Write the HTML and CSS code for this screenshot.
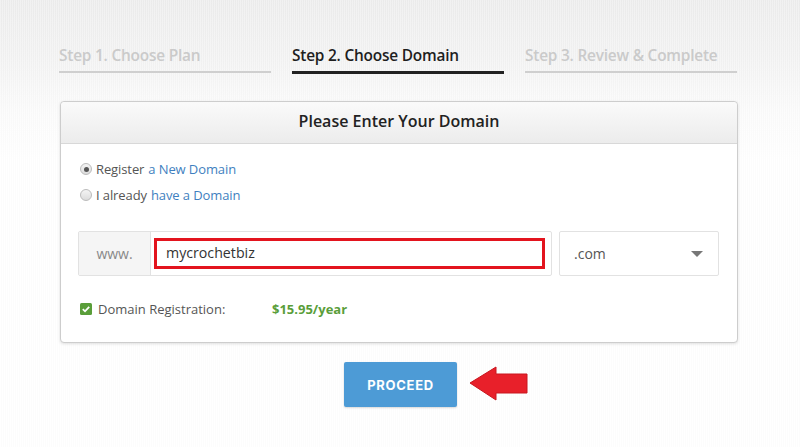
FILE: index.html
```html
<!DOCTYPE html>
<html>
<head>
<meta charset="utf-8">
<link rel="stylesheet" href="styles.css">
</head>
<body>
<div class="page">
  <div class="steps">
    <div class="step">Step 1. Choose Plan</div>
    <div class="step active">Step 2. Choose Domain</div>
    <div class="step">Step 3. Review &amp; Complete</div>
  </div>

  <div class="panel">
    <div class="panel-head">Please Enter Your Domain</div>
    <div class="panel-body">
      <div class="radios">
        <label class="radio"><span class="dot checked"></span>Register <a>a New Domain</a></label>
        <label class="radio"><span class="dot"></span>I already <a>have a Domain</a></label>
      </div>
      <div class="domain-row">
        <div class="input-group">
          <span class="addon">www.</span>
          <div class="field"><div class="highlight">mycrochetbiz</div></div>
        </div>
        <div class="select">
          <span>.com</span>
          <span class="caret"></span>
        </div>
      </div>
      <div class="reg">
        <span class="check"><svg width="12" height="12" viewBox="0 0 12 12"><rect width="12" height="12" rx="1.5" fill="#5a9e3a"/><path d="M2.8 6.2 L5 8.3 L9.2 3.8" stroke="#fff" stroke-width="1.8" fill="none"/></svg></span>
        <span class="reg-label">Domain Registration:</span>
        <span class="price">$15.95/year</span>
      </div>
    </div>
  </div>

  <div class="actions">
    <button class="proceed">PROCEED</button>
    <svg class="arrow" width="60" height="36" viewBox="0 0 60 36"><path d="M1 17 L27 1 L27 8 L58 8 L58 27 L27 27 L27 34 Z" fill="#e8202a" stroke="#c8161e" stroke-width="1" stroke-linejoin="round"/></svg>
  </div>
</div>
</body>
</html>
```

FILE: styles.css
```css
* { box-sizing: border-box; }
html, body { margin: 0; padding: 0; }
body {
  width: 800px;
  height: 447px;
  overflow: hidden;
  font-family: "Open Sans", "Liberation Sans", sans-serif;
  background:
    repeating-linear-gradient(90deg, rgba(255,255,255,0.25) 0 1px, rgba(0,0,0,0.012) 1px 2px),
    linear-gradient(180deg, #ededed 0px, #f3f3f3 60px, #fbfbfb 110px, #ffffff 160px);
}
.page {
  width: 680px;
  margin: 0 auto;
  padding-top: 44px;
}
.steps {
  display: grid;
  grid-template-columns: 212px 212px 212px;
  column-gap: 21px;
  margin-left: -1px;
}
.step {
  font-size: 15.4px;
  font-weight: 600;
  color: #cacaca;
  letter-spacing: -0.2px;
  height: 29px;
  line-height: 24px;
  border-bottom: 2px solid #cfcfcf;
}
.step.active {
  color: #1e1e1e;
  border-bottom: 3px solid #222;
  height: 30px;
}
.panel {
  margin-top: 27px;
  width: 678px;
  border: 1px solid #cdcdcd;
  border-radius: 4px;
  background: #fff;
  box-shadow: 0 1px 3px rgba(0,0,0,0.12);
}
.panel-head {
  height: 42px;
  line-height: 39px;
  text-align: center;
  font-size: 16px;
  font-weight: 600;
  color: #222;
  background: linear-gradient(180deg, #fafafa, #ececec);
  border-bottom: 1px solid #d8d8d8;
  border-radius: 4px 4px 0 0;
}
.panel-body {
  padding: 15px 18px 23px 17px;
}
.radios {
  display: flex;
  flex-direction: column;
  row-gap: 6px;
}
.radio {
  display: flex;
  align-items: center;
  font-size: 13px;
  letter-spacing: -0.1px;
  color: #555;
  height: 20px;
}
.radio a { color: #3f7fc0; margin-left: 4px; }
.dot {
  width: 12px;
  height: 12px;
  border-radius: 50%;
  border: 1px solid #bbb;
  background: linear-gradient(180deg, #f4f4f4, #dcdcdc);
  margin-right: 4px;
  margin-left: 2px;
  position: relative;
}
.dot.checked::after {
  content: "";
  position: absolute;
  left: 2.5px; top: 2.5px;
  width: 5px; height: 5px;
  border-radius: 50%;
  background: #555;
}
.domain-row {
  display: flex;
  column-gap: 7px;
  margin-top: 26px;
}
.input-group {
  display: flex;
  width: 474px;
  height: 45px;
  border: 1px solid #e2e2e2;
  border-radius: 2px;
}
.addon {
  width: 72px;
  background: #f5f5f5;
  border-right: 1px solid #e2e2e2;
  color: #888;
  font-size: 14px;
  display: flex;
  align-items: center;
  justify-content: center;
}
.field {
  flex: 1;
  padding: 6px 6px 6px 3px;
}
.highlight {
  height: 31px;
  border: 3px solid #e3141e;
  font-size: 14.2px;
  color: #333;
  padding-left: 9px;
  line-height: 24px;
}
.select {
  width: 160px;
  height: 45px;
  border: 1px solid #e2e2e2;
  border-radius: 2px;
  display: flex;
  align-items: center;
  justify-content: space-between;
  padding: 0 15px 0 14px;
  font-size: 14px;
  color: #555;
}
.caret {
  width: 0; height: 0;
  border-left: 6px solid transparent;
  border-right: 6px solid transparent;
  border-top: 6px solid #777;
}
.reg {
  display: flex;
  align-items: center;
  margin-top: 23px;
  font-size: 13px;
  color: #555;
  height: 20px;
}
.check { display: flex; margin-left: 2px; margin-right: 6px; }
.reg-label { width: 174px; }
.price { color: #5a9e3a; font-weight: 700; }
.actions {
  position: relative;
  display: flex;
  justify-content: center;
  margin-top: 19px;
  padding-left: 1px;
}
.proceed {
  width: 113px;
  height: 45px;
  border: none;
  border-radius: 2px;
  background: #4d9bd6;
  color: #fff;
  font-family: "Inter", "Liberation Sans", sans-serif;
  font-weight: 700;
  font-size: 13px;
  letter-spacing: 0.7px;
  box-shadow: 0 1px 2px rgba(0,0,0,0.15);
}
.arrow {
  position: absolute;
  left: 409px;
  top: 4px;
}
```
